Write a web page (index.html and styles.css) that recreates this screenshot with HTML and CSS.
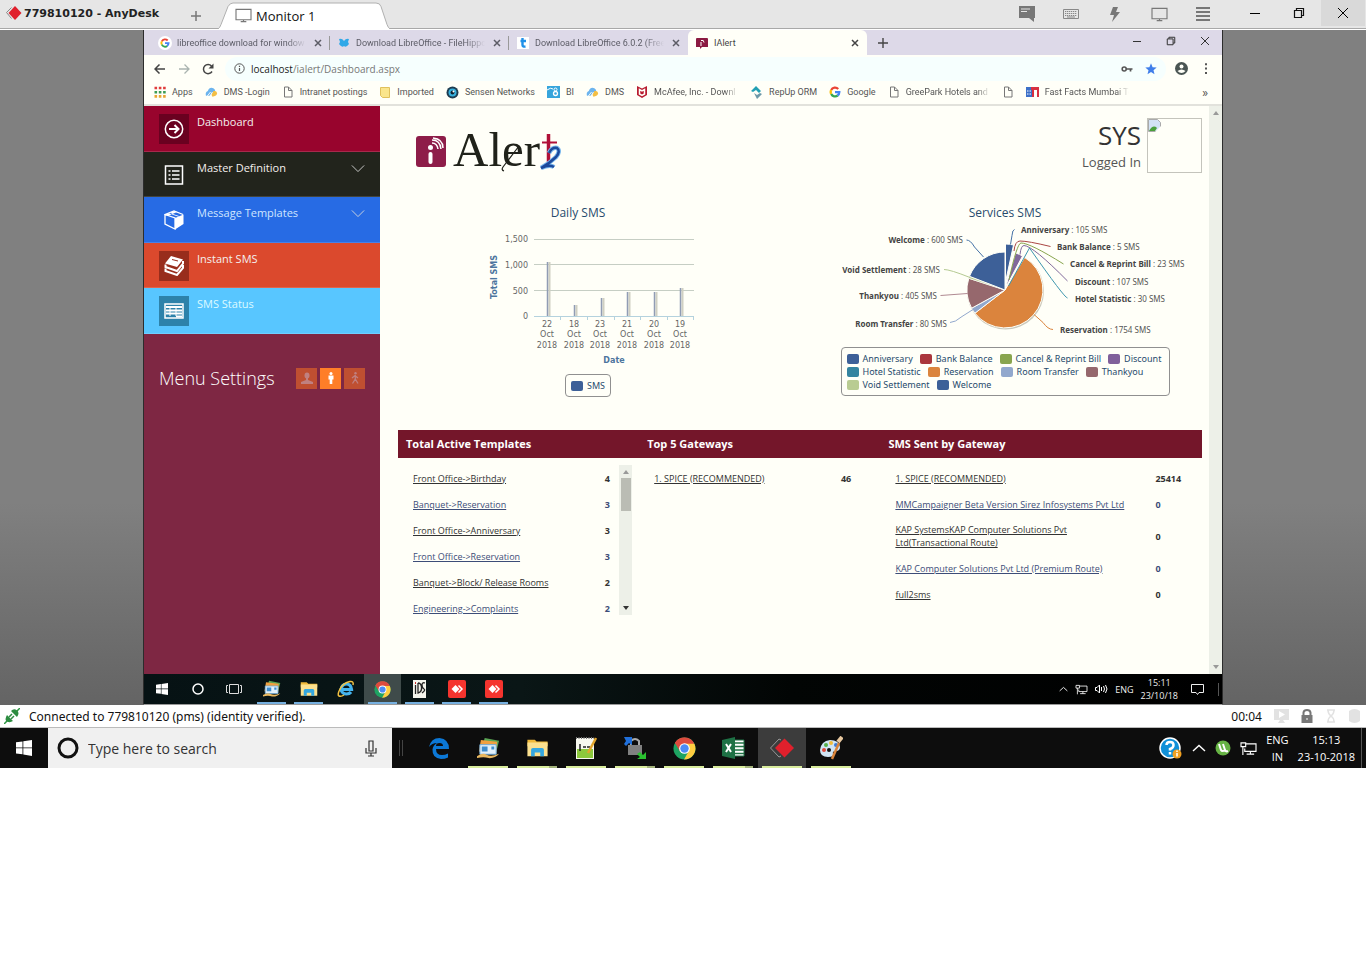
FILE: index.html
```html
<!DOCTYPE html>
<html lang="en">
<head>
<meta charset="utf-8">
<title>779810120 - AnyDesk</title>
<link rel="stylesheet" href="styles.css">
</head>
<body>
<svg class="defs" aria-hidden="true">
  <defs>
    <symbol id="google" viewBox="0 0 24 24"><g fill="none" stroke-width="4.6"><path stroke="#ea4335" d="M4.4 8A8.6 8.6 0 0 1 18.4 6"/><path stroke="#fbbc05" d="M4.4 8a8.6 8.6 0 0 0 0 8"/><path stroke="#34a853" d="M4.4 16a8.6 8.6 0 0 0 13 3"/><path stroke="#4285f4" d="M12 12.2h8.6A8.6 8.6 0 0 1 17 19"/></g></symbol>
    <symbol id="chrome" viewBox="0 0 24 24"><circle cx="12" cy="12" r="11.5" fill="#1ea362"/><path fill="#e04b3e" d="M12 12 2 6.3A11.5 11.5 0 0 1 22 6.4Z"/><path fill="#dd4b3e" d="M2 6.3 7.4 15 12 7h10A11.5 11.5 0 0 0 2 6.3"/><path fill="#ffcd40" d="M12 7h10.3A11.5 11.5 0 0 1 11.5 23.5l5-9z"/><circle cx="12" cy="12" r="5.6" fill="#fff"/><circle cx="12" cy="12" r="4.4" fill="#4c8bf5"/></symbol>
    <symbol id="folder" viewBox="0 0 24 24"><path fill="#f0b93a" d="M1 3h8l2 2h12v5H1z"/><path fill="#fbe08f" d="M1 6h22v15H1z"/><path fill="#34a7e0" d="M5 21v-7q0-2 2-2h10q2 0 2 2v7h-4v-4H9v4z"/></symbol>
    <symbol id="mail" viewBox="0 0 24 24"><path fill="#5aa554" d="m8 1 15 3-3 12L5 13z"/><path fill="#f0a040" d="m4 3 17 2-1 13L2 15z"/><path fill="#e2f0fa" stroke="#6aa8d8" d="M3 8h17v10H3z"/><path fill="#3d8ccd" d="M5 10h6v5H5zM15 10h3v3h-3z"/><path fill="#e9b860" d="M0 20q6-4 10-1.500 5 2.500 13-1-4 5-11 4.500-5-2-12 0z"/></symbol>
    <symbol id="doc" viewBox="0 0 12 12"><path fill="none" stroke="#777" d="M2.500 1h4L10 4.500V11H2.500zM6.500 1v3.500H10"/></symbol>
    <symbol id="cloud" viewBox="0 0 14 12"><path fill="#6cb4ee" d="M1 10Q0 6 3 5q2-5 6-3 2 1 2 3L5 10z"/><path fill="#f3bf45" d="m7 9 2-4q4-1 4 3-1 3-5 3z"/><path stroke="#fffff8" d="m2 11 4-5M5 11l3-5"/></symbol>
    <symbol id="win" viewBox="0 0 16 16"><path fill="#fff" d="M0 2.300 6.500 1.400v6H0zM7.300 1.300 16 0v7.400H7.300zM0 8.300h6.500v6L0 13.500zM7.300 8.300H16V16l-8.700-1.400z"/></symbol>
    <symbol id="x" viewBox="0 0 12 12"><path stroke="currentColor" stroke-width="1.500" d="m3 3 6 6m0-6L3 9"/></symbol>
    <symbol id="net" viewBox="0 0 18 16"><g fill="none" stroke="#fff" stroke-width="1.200"><path d="M6 3h11v8H5V8M11 11v3M7 14h8"/><path d="M1 2h5v4H1zM3 6v9"/></g></symbol>
    <symbol id="up" viewBox="0 0 14 8"><path fill="none" stroke="#fff" stroke-width="1.400" d="m1 7 6-5.500L13 7"/></symbol>
    <symbol id="down" viewBox="0 0 16 9"><path fill="none" stroke="currentColor" d="m1 1 7 7 7-7"/></symbol>
    <symbol id="screen" viewBox="0 0 18 16"><path fill="none" stroke="#777" stroke-width="1.200" d="M1 1.500h16v11H1zM9 12.500v2M6 14.500h6"/></symbol>
    <symbol id="restore" viewBox="0 0 12 12"><path fill="none" stroke="currentColor" stroke-width="1.200" d="M1.500 3.500h7v7h-7zM3.500 3.500v-2h7v7h-2"/></symbol>
    <symbol id="anydesk" viewBox="0 0 18 18"><rect width="18" height="18" rx="2" fill="#f5342e"/><path fill="#fff" d="m7.500 5 4 4-4 4-4-4z"/><path fill="none" stroke="#fff" stroke-width="1.500" d="m10.500 5.500 3.500 3.500-3.500 3.500"/></symbol>
    <symbol id="tri" viewBox="0 0 6 4"><path fill="currentColor" d="M0 4 3 0l3 4z"/></symbol>
  </defs>
</svg>

<header class="titlebar">
  <div class="session">
    <svg width="16" height="14" viewBox="0 0 16 14"><path fill="none" stroke="#888" d="m5.500 1.500-5 5 5 6"/><path fill="#e0202c" d="M9 0l6.500 7L9 14 2.500 7z"/></svg>
    <h1 class="session-id">779810120 - AnyDesk</h1>
  </div>
  <button class="new-session" aria-label="New session"><svg width="12" height="12" viewBox="0 0 12 12"><path stroke="#777" stroke-width="1.500" d="M6 1v10M1 6h10"/></svg></button>
  <button class="monitor-tab">
    <svg class="tab-shape" width="172" height="28" viewBox="0 0 172 28"><path fill="#fff" stroke="#b0b0b0" d="M0 28.500Q2 27 3 24L10 6q2-3.500 5-3.500h143q4 0 5 3.500l6 18q1 3 3 4.500"/></svg>
    <svg class="tab-icon" width="17" height="15"><use href="#screen"/></svg>
    <span class="tab-label">Monitor 1</span>
  </button>
  <div class="tools">
    <button aria-label="Chat"><svg width="16" height="16" viewBox="0 0 16 16"><path fill="#777" d="M0 0h16v12h-1v4l-5-4H0z"/><path stroke="#e6e6e6" stroke-width="1.200" d="M2 3h9M2 5.500h6"/></svg></button>
    <button aria-label="Keyboard"><svg width="16" height="10" viewBox="0 0 16 10"><path fill="none" stroke="#888" d="M.5.5h15v9H.5z"/><path stroke="#888" stroke-dasharray="1.300 .7" d="M2 2.500h12M2 4.500h12M2 6.500h12"/><path stroke="#888" d="M4 8h8"/></svg></button>
    <button aria-label="Actions"><svg width="10" height="15" viewBox="0 0 10 15"><path fill="#777" d="M3 0h5L6 5h4L2 15l2-7H0z"/></svg></button>
    <button aria-label="Display"><svg width="17" height="15"><use href="#screen"/></svg></button>
    <button aria-label="Menu"><svg width="14" height="14" viewBox="0 0 14 14"><path stroke="#777" stroke-width="2" d="M0 1h14M0 5h14M0 9h14M0 13h14"/></svg></button>
  </div>
  <div class="window-buttons">
    <button aria-label="Minimize"><svg width="10" height="10" viewBox="0 0 10 10"><path stroke="#000" d="M0 5.500h10"/></svg></button>
    <button aria-label="Restore"><svg width="12" height="12"><use href="#restore"/></svg></button>
    <button class="close" aria-label="Close"><svg width="12" height="12" viewBox="0 0 12 12"><path stroke="#000" d="m1 1 10 10M11 1 1 11"/></svg></button>
  </div>
</header>

<div class="stage">
  <div class="remote">
    <div class="tabs">
      <div class="tab"><svg class="fav" viewBox="0 0 14 14"><circle cx="7" cy="7" r="7" fill="#fff"/><use href="#google" x="2" y="2" width="10" height="10"/></svg><span class="tab-text fade">libreoffice download for window</span><button aria-label="Close tab"><svg width="12" height="12"><use href="#x"/></svg></button></div>
      <div class="tab"><svg class="fav" viewBox="0 0 14 14"><path fill="#2fa8e8" d="M2 3q3-1 5 2 2-3 5-2l-1 3 1 2q-3 4-5 2-2 2-5-2l1-2z"/></svg><span class="tab-text fade">Download LibreOffice - FileHippo</span><button aria-label="Close tab"><svg width="12" height="12"><use href="#x"/></svg></button></div>
      <div class="tab"><svg class="fav" viewBox="0 0 14 14"><path fill="#fff" d="M1 1h12v12H1z"/><path fill="none" stroke="#2090e8" stroke-width="2.400" d="M6.500 2v7q0 2 3 1.500M4.500 5H10"/></svg><span class="tab-text fade">Download LibreOffice 6.0.2 (Free</span><button aria-label="Close tab"><svg width="12" height="12"><use href="#x"/></svg></button></div>
      <div class="tab active"><svg class="fav" viewBox="0 0 14 14"><path fill="#8b1a42" d="M2 2h10q1 0 1 1v8H7l-2 2v-2H1V3q0-1 1-1z"/><path fill="none" stroke="#fff" d="M6 6v4M6 4.500q3-1 3 2"/></svg><span class="tab-text">IAlert</span><button aria-label="Close tab"><svg width="12" height="12"><use href="#x"/></svg></button></div>
      <button class="add-tab" aria-label="New tab"><svg width="10" height="10" viewBox="0 0 10 10"><path stroke="#444" stroke-width="1.400" d="M5 0v10M0 5h10"/></svg></button>
      <div class="remote-window">
        <button aria-label="Minimize"><svg width="8" height="10" viewBox="0 0 8 10"><path stroke="#333" d="M0 5.500h8"/></svg></button>
        <button aria-label="Restore"><svg width="10" height="10"><use href="#restore"/></svg></button>
        <button aria-label="Close"><svg width="8" height="8" viewBox="0 0 8 8"><path stroke="#333" d="m0 0 8 8M8 0 0 8"/></svg></button>
      </div>
    </div>
    <div class="toolbar">
      <button aria-label="Back"><svg width="12" height="10" viewBox="0 0 12 10"><path fill="none" stroke="#444" stroke-width="1.500" d="M11 5H1m4.500-4.500L1 5l4.500 4.500"/></svg></button>
      <button aria-label="Forward"><svg width="12" height="10" viewBox="0 0 12 10"><path fill="none" stroke="#aab4b0" stroke-width="1.300" d="M1 5h10M6.500.5 11 5 6.500 9.500"/></svg></button>
      <button aria-label="Reload"><svg width="12" height="12" viewBox="0 0 12 12"><path fill="none" stroke="#444" stroke-width="1.500" d="M10 8.500A4.600 4.600 0 1 1 9.500 3"/><path fill="#444" d="M11.500.5v5h-5z"/></svg></button>
      <div class="address">
        <svg width="11" height="11" viewBox="0 0 11 11"><circle cx="5.500" cy="5.500" r="4.700" fill="none" stroke="#555"/><path stroke="#555" stroke-width="1.200" d="M5.500 5v3M5.500 2.700V4"/></svg>
        <span class="url"><b>localhost</b>/ialert/Dashboard.aspx</span>
        <svg width="12" height="8" viewBox="0 0 12 8"><circle cx="3.200" cy="4" r="2" fill="none" stroke="#555" stroke-width="1.600"/><path stroke="#555" stroke-width="1.700" d="M5 4h6.500M9.500 4v2.500"/></svg>
        <svg class="star" width="12" height="12" viewBox="0 0 12 12"><path fill="#3f7eea" d="m6 .3 1.600 3.900 4.100.3-3.200 2.700 1 4.100L6 9.100l-3.500 2.200 1-4.100L.3 4.500l4.100-.3z"/></svg>
      </div>
      <button class="avatar" aria-label="Profile"><svg width="13" height="13" viewBox="0 0 13 13"><circle cx="6.500" cy="6.500" r="6.500" fill="#4a5553"/><circle cx="6.500" cy="4.500" r="2" fill="#fffff8"/><path fill="#fffff8" d="M2.500 9q4-3 8 0-4 4-8 0z"/></svg></button>
      <button class="dots" aria-label="More"><svg width="4" height="11" viewBox="0 0 4 11"><path stroke="#555" stroke-width="2" stroke-dasharray="2 2.300" d="M2 .3V11"/></svg></button>
    </div>
    <nav class="bookmarks" aria-label="Bookmarks">
      <a href="#"><svg width="12" height="12" viewBox="0 0 12 12"><g stroke-width="2.600" stroke-dasharray="2.600 1.700"><path stroke="#e03c3c" d="M.5 2h11.200"/><path stroke="#3c9c54" d="M.5 6.200h11.200"/><path stroke="#e8a532" d="M.5 10.400h11.200"/></g></svg>Apps</a>
      <a href="#"><svg width="13" height="12"><use href="#cloud"/></svg>DMS -Login</a>
      <a href="#"><svg width="12" height="12"><use href="#doc"/></svg>Intranet postings</a>
      <a href="#"><svg width="12" height="12" viewBox="0 0 12 12"><path fill="#fae58c" stroke="#e0c05c" d="M1.500 1.500h9v10h-7l-2-2z"/></svg>Imported</a>
      <a href="#"><svg width="13" height="13" viewBox="0 0 13 13"><circle cx="6.500" cy="6.500" r="6" fill="#1e3c50"/><circle cx="6.500" cy="6.500" r="4" fill="#36b0dd"/><circle cx="6.500" cy="6.500" r="2" fill="#102030"/><circle cx="7.500" cy="5.500" r="1" fill="#fff"/></svg>Sensen Networks</a>
      <a href="#"><svg width="13" height="12" viewBox="0 0 13 12"><path fill="#37a5dc" d="M0 0h13v12H0z"/><path fill="none" stroke="#fff" d="M0 4q4-3 6-1"/><circle cx="8.500" cy="7.500" r="2" fill="none" stroke="#fff" stroke-width="1.300"/><circle cx="8.500" cy="3.500" r="1.500" fill="none" stroke="#fff"/></svg>BI</a>
      <a href="#"><svg width="13" height="12"><use href="#cloud"/></svg>DMS</a>
      <a href="#"><svg width="12" height="12" viewBox="0 0 12 12"><path fill="#b81c30" d="m1 0 5 2.500L11 0v9l-5 3-5-3z"/><path fill="none" stroke="#fffff8" stroke-width="1.500" d="M3.500 3.500V8L6 9.300 8.500 8V3.500L6 5z"/></svg><span class="mark-text fade">McAfee, Inc. - Downl</span></a>
      <a href="#"><svg width="13" height="13" viewBox="0 0 13 13"><path fill="#22a0b4" d="m6 0 5 5-2 2-3-3-3 2-2-1z"/><path fill="#6c98a8" d="m4 7 3 2 3-2 2 1-5 5-1-2z"/></svg>RepUp ORM</a>
      <a href="#"><svg width="12" height="12"><use href="#google"/></svg>Google</a>
      <a href="#"><svg width="12" height="12"><use href="#doc"/></svg><span class="mark-text fade">GreePark Hotels and</span></a>
      <a href="#" aria-label="Untitled"><svg width="12" height="12"><use href="#doc"/></svg></a>
      <a href="#"><svg width="13" height="12" viewBox="0 0 13 12"><path fill="#3d70c8" d="M0 1h7v10H0z"/><path fill="#d83040" d="M5 1h8v3H5zM6 1h2v10H6zM11 1h2v10h-2z"/><path stroke="#fff" stroke-dasharray="1.500 1" d="M1 5h5M1 8h5M9.500 4v7"/></svg><span class="mark-text fade">Fast Facts Mumbai Td</span></a>
      <button class="more-marks" aria-label="More bookmarks">»</button>
    </nav>

    <div class="page">
      <aside class="sidebar">
        <nav class="menu" aria-label="Main">
          <a class="item crimson" href="#"><span class="tile"><svg width="20" height="20" viewBox="0 0 20 20"><circle cx="10" cy="10" r="8.700" fill="none" stroke="#fff" stroke-width="1.500"/><path fill="none" stroke="#fff" stroke-width="2" d="M5 10h9M10.500 6l4 4-4 4"/></svg></span><span>Dashboard</span></a>
          <a class="item dark" href="#"><span class="tile"><svg width="20" height="20" viewBox="0 0 20 20"><path fill="none" stroke="#fff" stroke-width="1.500" d="M1.500 1h17v18h-17z"/><path stroke="#fff" stroke-width="1.300" d="M4.500 6h2M8 6h7.500M4.500 10h2M8 10h7.500M4.500 14h2M8 14h7.500"/></svg></span><span>Master Definition</span><svg class="chev" width="14" height="9"><use href="#down"/></svg></a>
          <a class="item blue" href="#"><span class="tile"><svg width="20" height="20" viewBox="0 0 20 20"><path fill="none" stroke="#fff" stroke-width="1.300" d="M1 5v9l10 5V8L1 4.500 10 1l9 3.500"/><path fill="#fff" d="M11 8l8.500-3.500V14L11 19.500zM5 3.500l9 3 1-.5-9-3zM1 5l9-4 3 1-9 4z"/></svg></span><span>Message Templates</span><svg class="chev" width="14" height="9"><use href="#down"/></svg></a>
          <a class="item orange" href="#"><span class="tile"><svg width="20" height="20" viewBox="0 0 20 20"><path fill="#fff" d="m7 0 12 3.500-6 7.500L1 7.500z"/><path fill="none" stroke="#fff" stroke-width="2" d="M1.500 8.500v2.500l11.500 4 6-7.500V5M1.500 12.500V15L13 19l6-7V9"/><path stroke="#982d1c" d="m8 3.500 6 1.500"/></svg></span><span>Instant SMS</span></a>
          <a class="item sky" href="#"><span class="tile"><svg width="20" height="16" viewBox="0 0 20 16"><path fill="none" stroke="#fff" stroke-width="1.500" d="M1 1h18v14H1z"/><path stroke="#fff" stroke-width="1.800" d="M2 4h16M2 7.500h16M2 10.500h16M12 13.500h6"/><path stroke="#fff" d="M6 4v9M12 4v9"/></svg></span><span>SMS Status</span></a>
        </nav>
        <div class="settings">
          <h2 class="settings-title">Menu Settings</h2>
          <div class="modes">
            <button aria-label="Profile"><svg width="12" height="12" viewBox="0 0 12 12"><ellipse cx="6" cy="3.500" rx="2.500" ry="3" fill="currentColor"/><path fill="currentColor" d="M5 6h2v2l5 2v2H0v-2l5-2z"/></svg></button>
            <button class="on" aria-label="Standing"><svg width="12" height="12" viewBox="0 0 12 12"><circle cx="6" cy="1.500" r="1.500" fill="currentColor"/><path fill="currentColor" d="M3.500 3.500h5v4H7.300V12H4.700V7.500H3.500z"/></svg></button>
            <button aria-label="Walking"><svg width="12" height="12" viewBox="0 0 12 12"><circle cx="6.500" cy="1.200" r="1.200" fill="currentColor"/><path fill="none" stroke="currentColor" stroke-width="1.300" d="M6.300 3v4L3.500 11.500M6.300 7 9 11.500M3 6l3-2.500L9 6"/></svg></button>
          </div>
        </div>
      </aside>

      <main class="main">
        <header class="app-head">
          <svg class="logo" width="150" height="50" viewBox="0 0 150 50" role="img" aria-label="iAlert">
            <rect y="8" width="30" height="31" rx="3" fill="#8e1d49"/><circle cx="14.500" cy="19.500" r="2.500" fill="#fff"/><path stroke="#fff" stroke-width="4" stroke-linecap="round" d="M14.500 26v8"/><path fill="none" stroke="#fff" stroke-width="1.500" d="M16 15q5 0 6 6M16 12q8 0 9 9M17 10q10 1 10 10"/>
            <text x="37" y="38" class="logo-word">Aler</text><path fill="none" stroke="#20221a" stroke-width="1.200" d="M103 18 87 39q-2 3 1 4"/>
            <path stroke="#b01038" stroke-width="3.500" d="M132.500 6v30"/><path stroke="#b01038" stroke-width="2" d="M126 14.500h15"/>
            <path fill="none" stroke="#7ab8ee" stroke-width="4.500" d="M133 25q3-6 8-5 4 3-1 9-6 6-15 11 9-4 13-1"/><path fill="none" stroke="#1c4a9c" stroke-width="2.500" d="M133 25q3-6 8-5 4 3-1 9-6 6-15 11 9-4 13-1"/>
          </svg>
          <div class="user"><div class="user-text"><span class="user-name">SYS</span><span class="user-state">Logged In</span></div>
            <div class="photo" role="img" aria-label="User photo"><svg width="13" height="13" viewBox="0 0 13 13"><path fill="#d3e2f5" stroke="#aaa" d="M.5.500h9l3 3v9H.5z"/><path fill="#4ba03c" d="M1 12q4-7 8-3l-2 3z"/><path fill="#fffff8" d="m7 13 6-6v6z"/></svg></div></div>
        </header>

        <section class="charts">
          <figure class="chart">
            <h2 class="chart-title">Daily SMS</h2>
            <svg width="360" height="146" viewBox="0 0 360 146" role="img" aria-label="Daily SMS column chart">
              <g stroke="#c6cec4"><path d="M136 17.500h160M136 42.500h160M136 68.500h160"/><path stroke="#b4d2de" d="M136 94.500h160M162.500 94v4M189.500 94v4M216.500 94v4M242.500 94v4M269.500 94v4M295.500 94v4"/></g>
              <g stroke="#d0d0c2" stroke-width="2"><path d="M151.500 40v54M178.500 83v11M205.500 76v18M231.500 70v24M258.500 70v24M284.500 66v28"/></g>
              <g stroke="#909cb4"><path d="M149.500 40v54M176.500 83v11M203.500 76v18M229.500 70v24M256.500 70v24M282.500 66v28" stroke-width="1.500"/></g>
              <g class="axis" text-anchor="end"><text x="130" y="20">1,500</text><text x="130" y="46">1,000</text><text x="130" y="72">500</text><text x="130" y="97">0</text></g>
              <g class="axis" text-anchor="middle">
                <text x="149" y="105">22</text><text x="149" y="115">Oct</text><text x="149" y="126">2018</text>
                <text x="176" y="105">18</text><text x="176" y="115">Oct</text><text x="176" y="126">2018</text>
                <text x="202" y="105">23</text><text x="202" y="115">Oct</text><text x="202" y="126">2018</text>
                <text x="229" y="105">21</text><text x="229" y="115">Oct</text><text x="229" y="126">2018</text>
                <text x="256" y="105">20</text><text x="256" y="115">Oct</text><text x="256" y="126">2018</text>
                <text x="282" y="105">19</text><text x="282" y="115">Oct</text><text x="282" y="126">2018</text>
              </g>
              <g class="axis-title" text-anchor="middle"><text x="216" y="141">Date</text><text transform="translate(99 55) rotate(-90)">Total SMS</text></g>
            </svg>
            <ul class="legend small"><li><i class="c1"></i>SMS</li></ul>
          </figure>
          <figure class="chart">
            <h2 class="chart-title">Services SMS</h2>
            <svg class="pie" width="394" height="119" viewBox="0 0 394 119" role="img" aria-label="Services SMS pie chart">
              <circle cx="197.500" cy="69" r="38.500" fill="#c9c9bd"/>
              <path fill="#fffff8" d="M197 68V26l26 6z"/>
              <g stroke="#fffff8">
                <path fill="#db843d" d="M197 68 216.600 35.400A38 38 0 1 1 166.900 91.200z"/>
                <path fill="#92a8cd" d="M197 68 166.900 91.200A38 38 0 0 1 163.600 86.200z"/>
                <path fill="#96686d" d="M197 68 163.600 86.200A38 38 0 0 1 160.800 56.300z"/>
                <path fill="#b5ca92" stroke-width=".6" d="M197 68 160.800 56.300 161.500 54.300z"/>
                <path fill="#3d6098" d="M197 68 161.500 54.300A38 38 0 0 1 197 30z"/>
                <path fill="#3d6098" d="M197.500 60V22q4 0 8 1z"/>
                <path fill="#80699b" d="M197.500 66 207.500 31q4 1 7 3z"/>
              </g>
              <g fill="none">
                <path stroke="#4572a7" d="M206.500 7.500q-2 0-2.500 6l-1.500 9M158.500 18q4 0 8 7l9 10"/>
                <path stroke="#aa4643" d="M242.500 24.500Q220 19 212 19q-5 0-6 10"/>
                <path stroke="#89a54e" d="M255.500 42Q222 21 213 21q-4 0-12 37"/>
                <path stroke="#80699b" d="M259.500 59Q225 24 216 23.500q-3 0-4 9"/>
                <path stroke="#3d96ae" d="M259.500 76q-3 0-38-50l-21 38"/>
                <path stroke="#db843d" d="M245 107.500q-5 0-10-7l-9-8"/>
                <path stroke="#b5ca92" d="M136 47.500q6 0 26 8"/>
                <path stroke="#b08a92" d="M132.500 73.500 159.500 71.500"/>
                <path stroke="#92a8cd" d="M142 100.500q5 0 12-6l11-7"/>
              </g>
              <g class="pie-label">
                <text x="213" y="11"><tspan class="strong">Anniversary</tspan> : 105 SMS</text>
                <text x="249" y="28"><tspan class="strong">Bank Balance</tspan> : 5 SMS</text>
                <text x="262" y="45"><tspan class="strong">Cancel &amp; Reprint Bill</tspan> : 23 SMS</text>
                <text x="267" y="63"><tspan class="strong">Discount</tspan> : 107 SMS</text>
                <text x="267" y="80"><tspan class="strong">Hotel Statistic</tspan> : 30 SMS</text>
                <text x="252" y="111"><tspan class="strong">Reservation</tspan> : 1754 SMS</text>
              </g>
              <g class="pie-label" text-anchor="end">
                <text x="155" y="21"><tspan class="strong">Welcome</tspan> : 600 SMS</text>
                <text x="132" y="51"><tspan class="strong">Void Settlement</tspan> : 28 SMS</text>
                <text x="129" y="77"><tspan class="strong">Thankyou</tspan> : 405 SMS</text>
                <text x="139" y="105"><tspan class="strong">Room Transfer</tspan> : 80 SMS</text>
              </g>
            </svg>
            <ul class="legend wide">
              <li><i class="c1"></i>Anniversary</li><li><i class="c2"></i>Bank Balance</li><li><i class="c3"></i>Cancel &amp; Reprint Bill</li><li><i class="c4"></i>Discount</li>
              <li><i class="c5"></i>Hotel Statistic</li><li><i class="c6"></i>Reservation</li><li><i class="c7"></i>Room Transfer</li><li><i class="c8"></i>Thankyou</li>
              <li><i class="c9"></i>Void Settlement</li><li><i class="c1"></i>Welcome</li>
            </ul>
          </figure>
        </section>

        <section class="stats">
          <div class="stat">
            <h2 class="stat-title">Total Active Templates</h2>
            <div class="stat-body">
              <table>
                <tr><td><a href="#">Front Office-&gt;Birthday</a></td><td>4</td></tr>
                <tr><td><a href="#">Banquet-&gt;Reservation</a></td><td>3</td></tr>
                <tr><td><a href="#">Front Office-&gt;Anniversary</a></td><td>3</td></tr>
                <tr><td><a href="#">Front Office-&gt;Reservation</a></td><td>3</td></tr>
                <tr><td><a href="#">Banquet-&gt;Block/ Release Rooms</a></td><td>2</td></tr>
                <tr><td><a href="#">Engineering-&gt;Complaints</a></td><td>2</td></tr>
              </table>
              <div class="scroll inner"><svg class="arrow" width="6" height="4"><use href="#tri"/></svg><div class="thumb"></div><svg class="arrow down black" width="6" height="4"><use href="#tri"/></svg></div>
            </div>
          </div>
          <div class="stat">
            <h2 class="stat-title">Top 5 Gateways</h2>
            <div class="stat-body"><table><tr><td><a href="#">1. SPICE (RECOMMENDED)</a></td><td>46</td></tr></table></div>
          </div>
          <div class="stat">
            <h2 class="stat-title">SMS Sent by Gateway</h2>
            <div class="stat-body">
              <table class="sent">
                <tr><td><a href="#">1. SPICE (RECOMMENDED)</a></td><td>25414</td></tr>
                <tr><td><a href="#">MMCampaigner Beta Version Sirez Infosystems Pvt Ltd</a></td><td>0</td></tr>
                <tr><td><a href="#">KAP SystemsKAP Computer Solutions Pvt Ltd(Transactional Route)</a></td><td>0</td></tr>
                <tr><td><a href="#">KAP Computer Solutions Pvt Ltd (Premium Route)</a></td><td>0</td></tr>
                <tr><td><a href="#">full2sms</a></td><td>0</td></tr>
              </table>
            </div>
          </div>
        </section>
      </main>
      <div class="scroll"><svg class="arrow" width="6" height="4"><use href="#tri"/></svg><svg class="arrow down" width="6" height="4"><use href="#tri"/></svg></div>
    </div>

    <div class="remote-bar">
      <div class="system">
        <button aria-label="Start"><svg width="12" height="12"><use href="#win"/></svg></button>
        <button aria-label="Cortana"><svg width="12" height="12" viewBox="0 0 12 12"><circle cx="6" cy="6" r="5" fill="none" stroke="#fff" stroke-width="1.500"/></svg></button>
        <button aria-label="Task view"><svg width="16" height="12" viewBox="0 0 16 12"><path fill="none" stroke="#ddd" d="M3.500 1.500h9v9h-9zM2 2.500H.5v7H2M14 2.500h1.500v7H14"/></svg></button>
      </div>
      <div class="apps">
        <button class="run" aria-label="Mail"><svg width="18" height="18"><use href="#mail"/></svg></button>
        <button class="run" aria-label="Explorer"><svg width="18" height="18"><use href="#folder"/></svg></button>
        <button aria-label="Internet Explorer"><svg width="18" height="18" viewBox="0 0 18 18"><path fill="none" stroke="#45b4ee" stroke-width="3.200" d="M4 9.500h10.500Q14 4 9.500 4T4 9.500q1 4.500 5.500 4.500 3 0 4.500-2"/><path fill="none" stroke="#f5c342" stroke-width="1.500" d="M16 5q1-4-3-3.500Q6 3 3 9T2 16q2 1 5-1"/></svg></button>
        <button class="open run" aria-label="Chrome"><svg width="17" height="17"><use href="#chrome"/></svg></button>
        <button class="run" aria-label="IDS"><svg width="13" height="18" viewBox="0 0 13 18"><path fill="#f4f4ec" d="M0 0h13v18H0z"/><g fill="none" stroke="#222" stroke-width="1.300"><path d="M2.500 5v9M5 3v10q4-1 3.500-6Q8 3 5 3M12 3q-3-1-3 2t2 4-2 4"/></g><path stroke="#c33" d="M2.500 2v2"/></svg></button>
        <button class="run" aria-label="AnyDesk"><svg width="18" height="18"><use href="#anydesk"/></svg></button>
        <button class="run" aria-label="AnyDesk session"><svg width="18" height="18"><use href="#anydesk"/></svg></button>
      </div>
      <div class="remote-tray">
        <svg width="9" height="6"><use href="#up"/></svg>
        <svg width="13" height="11"><use href="#net"/></svg>
        <svg width="13" height="10" viewBox="0 0 13 10"><path fill="none" stroke="#fff" d="M.5 3.500H2L4.500 1v8L2 6.500H.5zM6.500 3v4M8.500 2q2 3 0 6M10.500 1q3 4 0 8"/></svg>
        <span>ENG</span>
        <span class="clock">15:11<br>23/10/18</span>
        <svg class="action" width="13" height="13" viewBox="0 0 13 13"><path fill="none" stroke="#eee" d="M.5 1.500h12v8H8L6.500 11.500 5 9.500H.5z"/></svg>
      </div>
    </div>
  </div>
</div>

<div class="status">
  <svg width="16" height="16" viewBox="0 0 16 16"><path stroke="#2c9440" stroke-width="1.500" d="m0 16 4-4M12 4l4-4"/><path fill="#2c8c40" d="m3 7 6 6q-3 2-6 .5T3 7zM7 3q3-3 6-.5T13 9z"/><path stroke="#2c8c40" stroke-width="1.500" d="m5 9 3-3M7 11l3-3"/></svg>
  <span>Connected to 779810120 (pms) (identity verified).</span>
  <div class="status-right">
    <span>00:04</span>
    <svg width="15" height="14" viewBox="0 0 15 14"><path fill="#e2e2e2" d="M0 0h15v11H9l2 3H4l2-3H0z"/><path fill="#fff" d="m5 2 6 3.500L5 9z"/></svg>
    <svg width="12" height="14" viewBox="0 0 12 14"><path fill="none" stroke="#777" stroke-width="2" d="M2.500 7V3.500Q3 1 6 1t3.500 2.500V7"/><path fill="#777" d="M.5 6h11v8H.5z"/><path stroke="#fff" d="M6 9v2"/></svg>
    <svg width="12" height="14" viewBox="0 0 12 14"><path fill="none" stroke="#e2e2e2" stroke-width="1.500" d="M2 1h8M2 13h8M3 1q0 4 3 6-3 2-3 6M9 1q0 4-3 6 3 2 3 6"/></svg>
    <svg width="11" height="14" viewBox="0 0 11 14"><path fill="#e2e2e2" d="M0 2q5.500-4 11 0v10q-5.500 4-11 0z"/></svg>
  </div>
</div>

<footer class="taskbar">
  <button class="start" aria-label="Start"><svg width="16" height="16"><use href="#win"/></svg></button>
  <label class="search">
    <svg width="22" height="22" viewBox="0 0 22 22"><circle cx="11" cy="11" r="9" fill="none" stroke="#111" stroke-width="3"/></svg>
    <input type="text" placeholder="Type here to search" aria-label="Search">
    <svg width="12" height="17" viewBox="0 0 12 17"><path fill="none" stroke="#333" stroke-width="1.200" d="M4 1h4v10H4zM1 8v5h10V8M6 13v3M3 16h6"/></svg>
  </label>
  <div class="grip"></div>
  <div class="pins">
    <button aria-label="Edge"><svg width="22" height="22" viewBox="0 0 22 22"><path fill="#0c78d6" d="M1 10Q3 1 11.500 1 21 2 21 12H8q0 6 6 6 3 0 6-1.500v4Q17 22 13 22 4 21 4.500 12.500 5 8 9 6 4 6 1 10zM8 9h7q0-3-3.500-3T8 9z"/></svg></button>
    <button class="run" aria-label="Mail"><svg width="23" height="23"><use href="#mail"/></svg></button>
    <button class="run multi" aria-label="Explorer"><svg width="23" height="22"><use href="#folder"/></svg></button>
    <button class="run" aria-label="Notepad++"><svg width="22" height="24" viewBox="0 0 22 24"><path fill="#f8f8f0" d="M1 2h18v21H1z"/><path fill="#8cc83c" d="M2 13h16v9H2z"/><path stroke="#777" stroke-width="2" stroke-dasharray="1 1.500" d="M1 2h18"/><path stroke="#222" stroke-width="1.500" d="M5 8v7M8 11h3M12 11h3"/><path stroke="#e2a52c" stroke-width="2.500" d="m21 2-8 15"/></svg></button>
    <button class="run multi" aria-label="WinSCP"><svg width="24" height="24" viewBox="0 0 24 24"><path fill="none" stroke="#aaa" stroke-width="2" d="M8 11V5q4-4 8 0v6"/><path fill="#808080" d="M5 9h14v10H5z"/><path fill="#2070dc" d="M1 1h8v8L6 7l-3 3-2-2 2-3z"/><path fill="#2ac030" d="M23 23h-9l3-2-3-3 3-2 3 3 3-3z"/></svg></button>
    <button class="run" aria-label="Chrome"><svg width="23" height="23"><use href="#chrome"/></svg></button>
    <button class="run multi" aria-label="Excel"><svg width="23" height="22" viewBox="0 0 23 22"><path fill="#fff" stroke="#217346" d="M12 3h10v16H12z"/><path stroke="#217346" stroke-width="1.500" d="M13 6h9M13 9.500h9M13 13h9M13 16.500h9"/><path fill="#1e7145" d="M0 3 13 0v22L0 19z"/><path stroke="#fff" stroke-width="2" d="m4 7 5 8M9 7l-5 8"/></svg></button>
    <button class="run open" aria-label="AnyDesk"><svg width="24" height="20" viewBox="0 0 24 20"><path fill="none" stroke="#999" d="M11 2 9 1 0.500 10 9 19l2-1"/><path fill="#e0202c" d="m14.500.5 9.500 9.500-9.500 9.500L5 10z"/></svg></button>
    <button class="run" aria-label="Paint"><svg width="24" height="24" viewBox="0 0 24 24"><path fill="#cfe4f4" d="M1 14Q2 5 11 4q9 0 10 7 0 4-4 4t-3 3-5 3q-8 0-8-7z"/><circle cx="5" cy="14" r="2" fill="#df4a3c"/><circle cx="7" cy="9" r="2" fill="#57b04a"/><circle cx="12" cy="7" r="2" fill="#f0bc3c"/><circle cx="17" cy="9" r="2" fill="#3d7ad2"/><circle cx="10" cy="14" r="2" fill="#111"/><path stroke="#d8843c" stroke-width="2.500" d="m13 23 7-16"/><path stroke="#e8c8a0" stroke-width="4" d="m19 6 4-5"/></svg></button>
  </div>
  <div class="tray">
    <svg width="24" height="22" viewBox="0 0 24 22"><circle cx="11" cy="11" r="10" fill="#1090d8" stroke="#fff" stroke-width="1.500"/><path fill="none" stroke="#fff" stroke-width="2.500" d="M7.500 8q0-3 3.500-3t3.500 3-3.500 4v1.500M11 15v2.500"/><circle cx="18" cy="17" r="4.500" fill="#f0a020"/><path stroke="#fff" stroke-width="1.500" d="M18 16v3.500M18 13.500V15"/></svg>
    <svg width="14" height="8"><use href="#up"/></svg>
    <svg width="16" height="16" viewBox="0 0 16 16"><circle cx="8" cy="8" r="7.500" fill="#66b344"/><path fill="none" stroke="#fff" stroke-width="2" d="m4 4 2 6q1 2 4 0L8 4M10 10q1 2 3 1"/></svg>
    <svg width="17" height="15"><use href="#net"/></svg>
    <span class="lang">ENG<br>IN</span>
    <span class="date">15:13<br>23-10-2018</span>
  </div>
</footer>
</body>
</html>
```
FILE: styles.css
```css
* { box-sizing: border-box; }
body { margin: 0; background: #fff; color: #111; font: 12px "Open Sans", "Noto Sans", sans-serif; }
button { border: 0; padding: 0; margin: 0; background: none; font: inherit; color: inherit; display: flex; align-items: center; justify-content: center; }
a { color: inherit; text-decoration: none; }
h1, h2, ul, figure { margin: 0; padding: 0; }
svg { flex: none; display: block; }
.defs { position: absolute; width: 0; height: 0; }

.titlebar { display: flex; height: 30px; background: #e6e6e6; border-bottom: 1px solid #fff; box-shadow: inset 0 -1px #a8a8a8; }
.session { display: flex; align-items: center; gap: 2px; padding: 0 0 3px 6px; width: 188px; }
.session-id { font: bold 11px "DejaVu Sans", sans-serif; color: #222; white-space: nowrap; }
.new-session { width: 16px; padding-top: 2px; }
.monitor-tab { position: relative; justify-content: flex-start; gap: 4px; width: 172px; margin-left: 14px; padding: 2px 0 0 17px; font: 13px "Open Sans", sans-serif; }
.tab-shape { position: absolute; left: 0; top: 0; height: 29px; }
.tab-icon, .tab-label { position: relative; }
.tools { display: flex; margin-left: auto; }
.tools button, .window-buttons button { width: 44px; height: 28px; }
.window-buttons { display: flex; margin: 0 1px 0 8px; }
.window-buttons button { height: 26px; }
.window-buttons .close { background: #d9d9d9; }

.stage { padding: 0 143px; background: linear-gradient(#808080 70%, #646464); }
.remote { border: solid #2c2c2c; border-width: 0 1px; background: #fffff8; border-bottom: 1px solid #999; }
.tabs { display: flex; height: 25px; padding-left: 7px; background: #ddd9e8; color: #5c5c66; font: 9px Roboto, sans-serif; }
.tab { display: flex; align-items: center; width: 179px; padding: 0 6px 0 7px; position: relative; }
.tab:nth-child(-n+2)::after { content: ""; position: absolute; right: 0; top: 6px; height: 14px; border-right: 1px solid #999; }
.tab.active { background: #fffff8; border-radius: 6px 6px 0 0; color: #444; }
.fav { width: 14px; height: 14px; margin-right: 5px; }
.tab-text { flex: 1; overflow: hidden; white-space: nowrap; margin-right: 6px; }
.fade { overflow: hidden; white-space: nowrap; -webkit-mask-image: linear-gradient(90deg, #000 85%, transparent); mask-image: linear-gradient(90deg, #000 85%, transparent); }
.add-tab { width: 32px; }
.remote-window { display: flex; margin-left: auto; color: #333; }
.remote-window button { width: 34px; height: 22px; }
.toolbar { display: flex; align-items: center; height: 27px; padding: 0 10px; gap: 12px; }
.address { display: flex; flex: 1; align-items: center; height: 24px; border-radius: 12px; margin-left: -1px; padding: 0 9px; background: #f6fffe; }
.url { flex: 1; margin-left: 6px; font-size: 10px; color: #777; }
.url b { font-weight: normal; color: #222; }
.star { margin-left: 12px; }
.avatar { margin-left: -3px; }
.dots { width: 12px; }
.bookmarks { display: flex; align-items: center; gap: 12px; height: 24px; padding: 0 14px 2px 10px; border-bottom: 2px solid #e2e2dc; color: #555; font: 9px Roboto, sans-serif; }
.bookmarks a { display: flex; align-items: center; gap: 6px; white-space: nowrap; }
.mark-text { width: 84px; }
.more-marks { margin-left: auto; font-size: 13px; }

.page { display: flex; min-height: 568px; }
.sidebar { width: 236px; background: #7e2743; color: #fff; }
.menu { display: grid; grid-auto-rows: 1fr; height: 228px; }
.item { display: flex; padding: 8px 15px 6px; gap: 8px; font-size: 11px; line-height: 16px; color: #f4f0ee; border-bottom: 1px solid rgba(255, 255, 255, .15); }
.tile { display: flex; align-items: center; justify-content: center; width: 30px; height: 30px; flex: none; }
.chev { margin: 4px 0 0 auto; color: #ddd; }
.crimson { background: #98042d; }
.crimson .tile { background: #6a0120; }
.dark { background: #22241c; }
.blue { background: #276be4; color: #cfe6ff; }
.orange { background: #db492d; }
.orange .tile { background: #982d1c; }
.sky { background: #58c6ff; color: #dcfaff; }
.sky .tile { background: #2d82aa; }
.settings { display: flex; align-items: center; justify-content: space-between; padding: 30px 15px; }
.settings-title { font-size: 18px; font-weight: 300; line-height: 28px; }
.modes { display: flex; gap: 3px; color: #c08080; }
.modes button { width: 21px; height: 21px; background: #bf4f31; }
.modes .on { background: #ff7e28; color: #fff; }

.main { flex: 1; min-width: 0; padding: 12px 7px 0 18px; }
.app-head { display: flex; justify-content: space-between; height: 86px; }
.logo { margin: 10px 0 0 18px; }
.logo-word { font: 49px "Liberation Serif", serif; fill: #20221a; }
.user { display: flex; gap: 6px; }
.user-text { display: flex; flex-direction: column; align-items: flex-end; color: #333; }
.user-name { font-size: 26px; line-height: 34px; }
.user-state { font-size: 13px; line-height: 20px; color: #555; }
.photo { width: 55px; height: 55px; border: 1px solid #c4c4bc; }
.charts { display: grid; grid-template-columns: 360px 1fr; gap: 50px; height: 226px; }
.chart { display: flex; flex-direction: column; align-items: center; }
.chart-title { font: 12px "Open Sans", sans-serif; line-height: 18px; color: #274b6d; }
.axis { font: 8px "DejaVu Sans", sans-serif; fill: #666; }
.axis-title { font: bold 8px "DejaVu Sans", sans-serif; fill: #4d759e; }
.pie { overflow: visible; margin-bottom: 6px; }
.pie-label { font: 8px "Noto Sans", sans-serif; fill: #555; }
.strong { font-weight: bold; fill: #444; }
.legend { display: flex; flex-wrap: wrap; list-style: none; border: 1px solid #909090; border-radius: 4px; padding: 4px 5px; gap: 0 7px; font: 9px "Noto Sans", sans-serif; line-height: 13px; color: #274b6d; }
.legend.small { margin: 6px 0 0 20px; }
.legend.wide { width: 329px; }
.legend li { display: flex; align-items: center; gap: 4px; white-space: nowrap; }
.legend i { width: 12px; height: 10px; border-radius: 2px; }
.c1 { background: #3d6098; } .c2 { background: #aa363c; } .c3 { background: #89a54e; } .c4 { background: #80609b; } .c5 { background: #3484a0; }
.c6 { background: #db843d; } .c7 { background: #92a8cd; } .c8 { background: #96686d; } .c9 { background: #b9cc92; }

.stats { display: grid; grid-template-columns: 3fr 3fr 4fr; }
.stat-title { height: 28px; padding-left: 8px; background: #74162a; color: #fff; font-size: 11px; line-height: 28px; }
.stat-body { display: flex; align-items: flex-start; justify-content: space-between; padding: 7px 7px 0 15px; }
table { border-collapse: collapse; width: 197px; font-size: 9px; line-height: 13px; color: #333; }
td { height: 26px; padding: 6px 0; }
td:last-child { font-weight: bold; text-align: right; }
td a { text-decoration: underline; }
tr:nth-child(even) { color: #3d4d78; }
.sent { width: 290px; }
.sent td:last-child { text-align: left; width: 30px; }
.sent td:first-child { padding-right: 16px; }
.scroll { display: flex; flex-direction: column; align-items: center; width: 13px; padding: 5px 0; background: #edf0e8; color: #999; }
.inner { height: 150px; }
.down { transform: rotate(180deg); margin-top: auto; }
.black { color: #333; }
.thumb { width: 10px; height: 33px; margin-top: 4px; background: #babcb4; }

.remote-bar { display: flex; height: 30px; background: linear-gradient(90deg, #061214, #0a1616 35%, #020504 60%, #000); color: #eee; font: 9px "Open Sans", sans-serif; }
.system, .apps { display: flex; }
.system button { width: 36px; }
.apps { margin-left: 1px; }
.apps button { width: 37px; position: relative; }
.apps .open { background: #3f4b4a; }
.run::after { content: ""; position: absolute; left: 4px; right: 4px; bottom: 0; height: 2px; background: #76b0e0; }
.remote-tray { display: flex; align-items: center; gap: 7px; margin-left: auto; padding-right: 3px; }
.clock { line-height: 13px; text-align: center; }
.action { margin-left: 6px; box-sizing: content-box; padding-right: 14px; border-right: 1px solid #555; }

.status { display: flex; align-items: center; gap: 9px; height: 23px; padding: 0 6px 0 4px; border-bottom: 1px solid #bbb; font: 12px "Noto Sans", sans-serif; }
.status-right { display: flex; align-items: center; gap: 12px; margin-left: auto; }
.taskbar { display: flex; height: 40px; background: #0d0d0d; color: #fff; }
.start { width: 48px; }
.search { display: flex; align-items: center; gap: 9px; width: 344px; padding: 0 15px 0 9px; background: #f0f0f0; }
.search input { flex: 1; min-width: 0; border: 0; padding: 0; background: none; outline: 0; font: 14px "Open Sans", sans-serif; }
.search input::placeholder { color: #333; opacity: 1; }
.grip { width: 4px; height: 16px; margin: 12px 12px 0 7px; border: solid #444; border-width: 0 1px; }
.pins { display: flex; gap: 1px; }
.pins button { position: relative; width: 48px; }
.pins .open { background: #3c3c3c; }
.pins .run::after { background: #d8ec9c; }
.pins .multi::after { border-right: 8px solid #a4b47c; }
.tray { display: flex; align-items: center; gap: 9px; margin: 0 4px 0 auto; padding-right: 6px; border-right: 1px solid #555; font-size: 11px; line-height: 17px; text-align: center; }
```
